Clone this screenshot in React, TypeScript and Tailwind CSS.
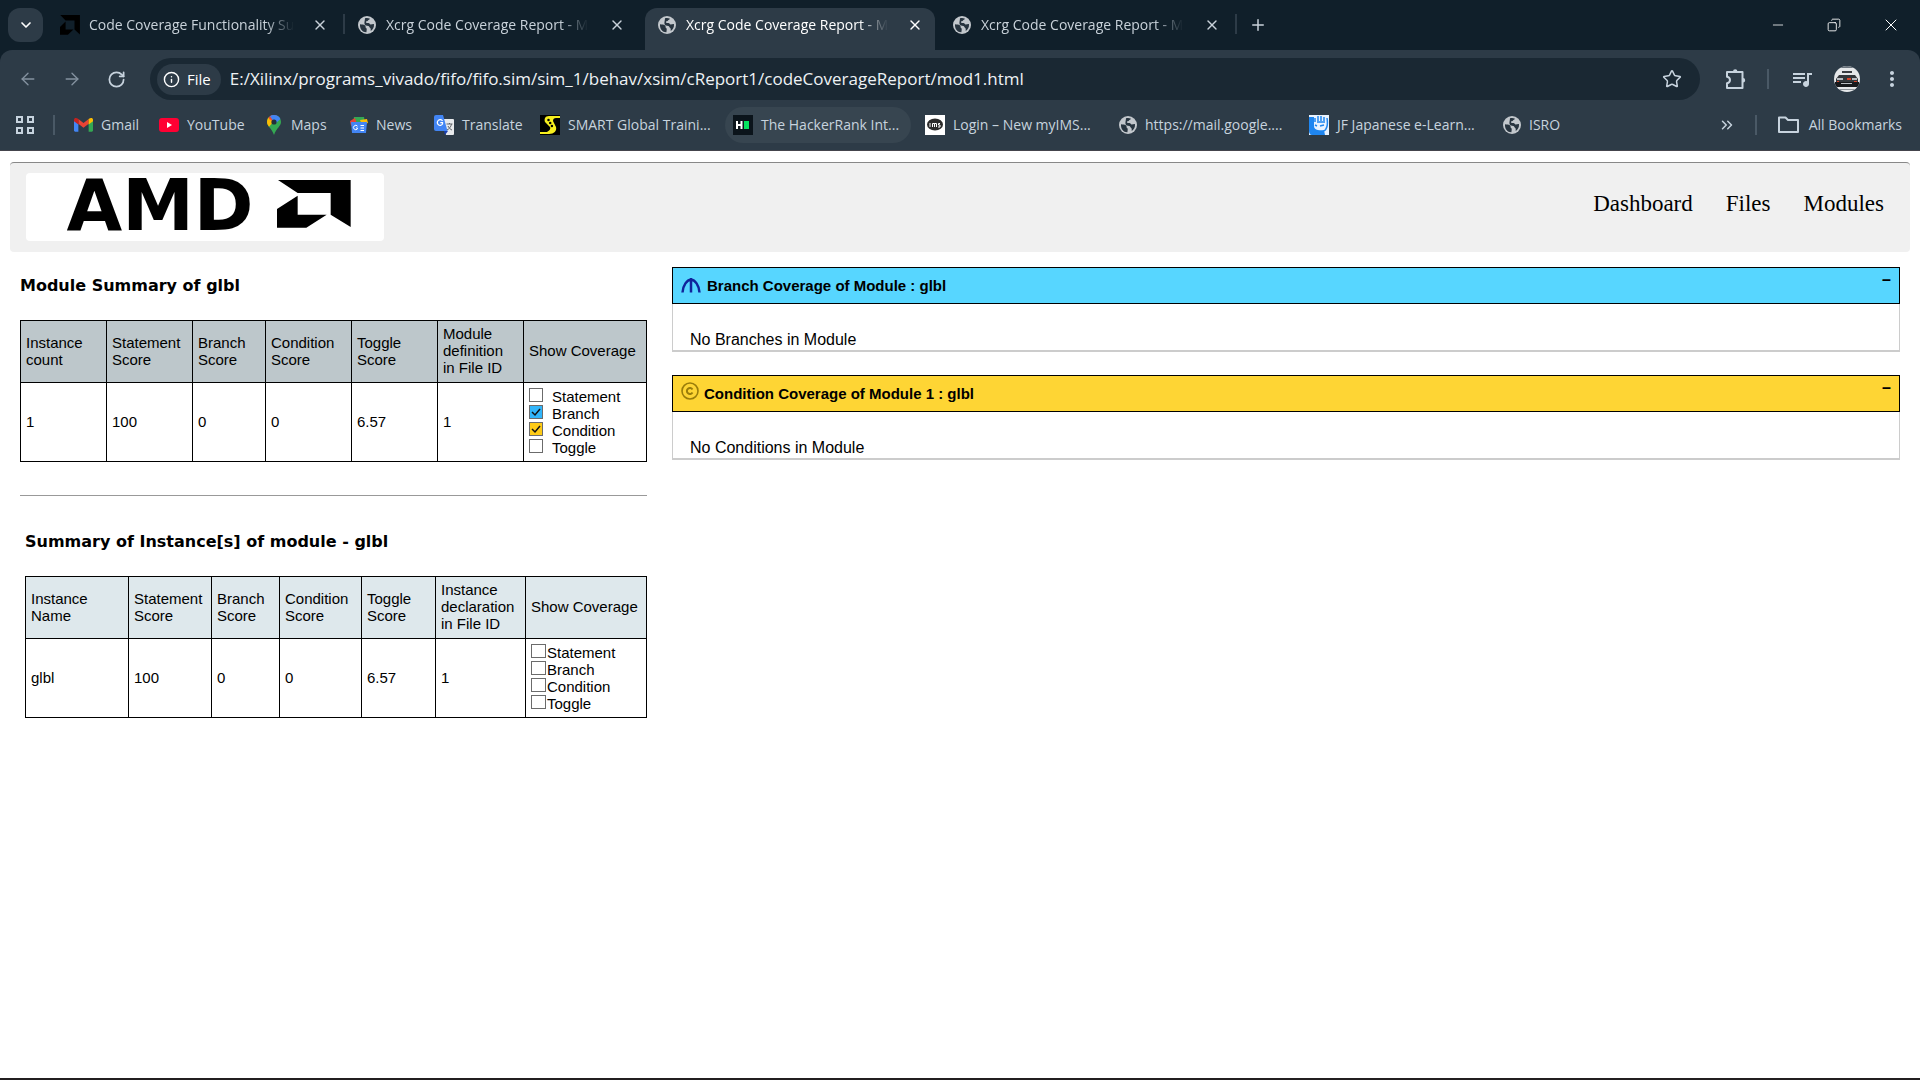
import React, { useState } from "react";
import { ArrowLeft, ArrowRight, ChevronDown, ChevronsRight, Copy, Info, Minus, Plus, RotateCw, Star, X } from "lucide-react";
import { MdQueueMusic, MdMoreVert } from "react-icons/md";

const UI = "font-['Open_Sans','Noto_Sans',sans-serif]";
const ARIAL = "font-['Liberation_Sans',Arial,sans-serif]";

function GlobeIcon({ className }: { className?: string }) {
  return (
    <svg viewBox="0 0 18 18" className={className} aria-hidden="true">
      <circle cx="9" cy="9" r="9" fill="#c2c7cc" />
      <path d="M2 8.2c2 .3 4.300.2 5.200 1.300.9 1-.2 2 .9 2.600 1 .5.600 2.200.3 4.100C4.800 16.400 1.600 13.200 2 8.200z" fill="#27343f" />
      <path d="M7 2.200c1.800-.6 3.600-.3 5 .5-.3 1-1.700 1-2 1.900-.3.900-1.900.4-2 1.300-.1 1 1.400 1.300 2.400 1.200 1.100-.1 1 1.200 2.100 1.300 1.300.1 2.300-.5 3.500-.2.3 3-1.200 5.500-3.200 6.800-.4-1.100.5-2-.6-2.900-.9-.6-.7-1.900-2-2.100-1.500-.3-3.300-.5-3.700-2.100-.3-1.700.4-3.700.5-5.700z" fill="#27343f" />
    </svg>
  );
}

function AmdArrow({ className, fill = "#000" }: { className?: string; fill?: string }) {
  return (
    <svg viewBox="0 0 222 144" preserveAspectRatio="none" className={className} aria-hidden="true">
      <path d="M3 0H221V141L161 104V39H62z" fill={fill} />
      <path d="M62 47V104H149L88 143H0V87z" fill={fill} />
    </svg>
  );
}

function PuzzleIcon() {
  return (
    <svg viewBox="0 0 22 22" className="h-[22px] w-[22px]" fill="none" stroke="currentColor" strokeWidth="2" strokeLinejoin="round" aria-hidden="true">
      <path d="M2 4h15.500v16H2v-4.800c2-.4 3-1.600 3-3.200S4 9.200 2 8.800z" />
      <path d="M8 3.500a2.200 2.200 0 0 1 4.400 0zM18 10a2.200 2.200 0 0 1 0 4.400z" fill="currentColor" stroke="none" />
    </svg>
  );
}

const tabs = [
  { title: "Code Coverage Functionality Su", amd: true },
  { title: "Xcrg Code Coverage Report - M" },
  { title: "Xcrg Code Coverage Report - M", active: true },
  { title: "Xcrg Code Coverage Report - M" },
];

function TabStrip() {
  return (
    <div className="flex h-[50px] items-stretch pl-2">
      <button aria-label="Search tabs" className="mt-2 flex h-[34px] w-[35px] items-center justify-center rounded-xl bg-[#2d3b47] text-white">
        <ChevronDown size={16} strokeWidth={2.5} />
      </button>
      <div className="ml-[5px] flex">
        {tabs.map((t, i) => (
          <div
            key={i}
            className={
              "relative mt-2 flex h-[42px] items-center pb-2 pl-3 " +
              (t.active ? "ml-[3px] mr-[5px] w-[290px] rounded-t-xl bg-[#2d3b47] pr-3 text-white" : "w-[297px] pr-[17px] text-[#c9d2da]")
            }
          >
            {t.amd ? <AmdArrow className="h-5 w-5 shrink-0" /> : <GlobeIcon className="mx-px h-[18px] w-[18px] shrink-0" />}
            <span className="ml-[9px] whitespace-nowrap text-sm [mask-image:linear-gradient(to_right,#000_86%,transparent)]">
              {t.title}
            </span>
            <button aria-label="Close tab" className="ml-auto">
              <X size={16} />
            </button>
            {(i === 0 || i === 3) && <span className="absolute right-0 top-1.5 h-5 w-0.5 bg-[#2d3b47]" />}
          </div>
        ))}
      </div>
      <button aria-label="New tab" className="ml-3 text-[#c9d2da]">
        <Plus size={18} />
      </button>
      <div className="ml-auto flex items-center text-white">
        <button aria-label="Minimize" className="flex w-14 justify-center"><Minus size={16} strokeWidth={1.2} /></button>
        <button aria-label="Restore" className="flex w-14 justify-center"><Copy size={14} strokeWidth={1.5} className="-scale-x-100" /></button>
        <button aria-label="Close" className="flex w-[58px] justify-center"><X size={20} strokeWidth={1.2} /></button>
      </div>
    </div>
  );
}

function Toolbar() {
  return (
    <div className="flex h-[58px] items-center px-4 text-[#c7d3de]">
      <button aria-label="Back" className="ml-0.5 mr-6 text-[#8492a0]"><ArrowLeft size={20} strokeWidth={1.6} /></button>
      <button aria-label="Forward" className="mr-[25px] text-[#8492a0]"><ArrowRight size={20} strokeWidth={1.6} /></button>
      <button aria-label="Reload" className="mr-6"><RotateCw size={19} strokeWidth={2.2} /></button>
      <div className="flex h-[42px] flex-1 items-center rounded-full bg-[#1a2833] pl-[7px] pr-[18px]">
        <button className="flex h-[31px] items-center gap-[7px] rounded-full bg-[#2d3b47] px-1.5 pr-[10px] text-[15px] font-medium text-white">
          <Info size={17} />File
        </button>
        <input
          aria-label="Address"
          defaultValue="E:/Xilinx/programs_vivado/fifo/fifo.sim/sim_1/behav/xsim/cReport1/codeCoverageReport/mod1.html"
          className="ml-[9px] min-w-0 flex-1 bg-transparent text-[17px] text-[#eef2f5] outline-none"
        />
        <button aria-label="Bookmark"><Star size={20} strokeWidth={1.8} /></button>
      </div>
      <button aria-label="Extensions" className="ml-[25px]"><PuzzleIcon /></button>
      <span className="ml-[20px] h-5 w-0.5 bg-[#4a5966]" />
      <button aria-label="Media" className="ml-[21px]"><MdQueueMusic size={24} /></button>
      <button aria-label="Profile" className="ml-5">
        <svg viewBox="0 0 26 26" className="h-[26px] w-[26px]">
          <defs><clipPath id="avatar"><circle cx="13" cy="13" r="13" /></clipPath></defs>
          <g clipPath="url(#avatar)">
            <rect width="26" height="26" fill="#e6e8ea" />
            <path d="M0 0h26v2H0z" fill="#6c757e" />
            <path d="M8 5h10v2H8z" fill="#3a3d42" />
            <path d="M5 9h16l3 4v7H2v-7z" fill="#33373b" />
            <path d="M1 16h24v5H1z" fill="#17191c" />
            <path d="M3 12h6v2H3zM18 12h5v2h-5zM7 17h11v1H7z" fill="#b9bdc2" />
            <path d="M13 12h4v2h-4zM3 15h2v1H3zM20 15h3v1h-3z" fill="#d8452b" />
            <path d="M4 23h18v1H4z" fill="#8d9399" />
          </g>
        </svg>
      </button>
      <button aria-label="Menu" className="ml-5"><MdMoreVert size={24} /></button>
    </div>
  );
}

const marks: { label: string; icon: React.ReactNode; w: string; hover?: boolean }[] = [
  {
    label: "Gmail", w: "w-[85px]",
    icon: (
      <svg viewBox="0 0 24 18" className="h-[15px] w-[19px]">
        <path d="M0 3v13.500c0 .8.700 1.500 1.500 1.500H5.500V8z" fill="#4285f4" />
        <path d="M24 3v13.500c0 .8-.7 1.500-1.500 1.500H18.500V8z" fill="#34a853" />
        <path d="M5.500 8V2L12 7l6.500-5v6L12 13z" fill="#ea4335" />
        <path d="M0 3v2l5.500 4V2C3 0 0 .5 0 3z" fill="#c5221f" />
        <path d="M24 3v2l-5.500 4V2C21 0 24 .5 24 3z" fill="#fbbc04" />
      </svg>
    ),
  },
  {
    label: "YouTube", w: "w-[108px]",
    icon: <svg viewBox="0 0 20 14" className="h-[14px] w-5"><rect width="20" height="14" rx="3" fill="#ff0033" /><path d="M8 4l5 3-5 3z" fill="#fff" /></svg>,
  },
  {
    label: "Maps", w: "w-[83px]",
    icon: (
      <svg viewBox="0 0 14 20" className="mr-0.5 h-5 w-[14px]">
        <path d="M7 0C3 0 0 3 0 7c0 4 4.500 6 7 13 2.500-7 7-9 7-13 0-4-3-7-7-7z" fill="#34a853" />
        <path d="M1.600 2.500C.5 4 0 5.400 0 7c0 1.700.8 3.200 2 4.700L8 5z" fill="#fbbc04" />
        <path d="M1.600 2.500L6 6.500 2 4z" fill="#ea4335" />
        <path d="M1.600 2.500L5.500 6 10 .7C6.800-.6 3.500 0 1.600 2.500z" fill="#ea4335" />
        <path d="M3 1.300C6-1 12 0 13.400 4L9 8 5.500 5z" fill="#4285f4" />
        <circle cx="7" cy="7" r="2.600" fill="#22303b" />
      </svg>
    ),
  },
  {
    label: "News", w: "w-[84px]",
    icon: (
      <svg viewBox="0 0 18 16" className="h-4 w-[18px]">
        <path d="M4 0h10l1 6H3z" fill="#34a853" />
        <path d="M0 4l5-3 2 6-6 2z" fill="#ea4335" />
        <path d="M10 3l7-1 1 4-6 2z" fill="#fbbc04" />
        <path d="M1 5h16l-1 11H2z" fill="#4285f4" />
        <path d="M7.500 9.200a2.200 2.200 0 1 0 0 2.600V11H6M14 8.500h-3.500M14 11h-3.500M14 13.500h-3.500" stroke="#fff" fill="none" />
      </svg>
    ),
  },
  {
    label: "Translate", w: "w-[106px]",
    icon: (
      <svg viewBox="0 0 20 20" className="h-5 w-5">
        <path d="M8 4h11a1 1 0 0 1 1 1v14a1 1 0 0 1-1 1h-7z" fill="#e8eaed" />
        <path d="M10 16h4l-3 4z" fill="#1a3fb0" />
        <path d="M2 0h7l4.500 16H2a2 2 0 0 1-2-2V2a2 2 0 0 1 2-2z" fill="#4285f4" />
        <path d="M8.500 6A2.800 2.800 0 1 0 8.500 9V7.600H6.300" stroke="#fff" strokeWidth="1.300" fill="none" />
        <path d="M12.500 9h6M15.500 8v1M17.500 9c-.5 3-2.500 5-4.500 6M14 11c1 2 2.500 3.500 4 4" stroke="#5f6368" fill="none" />
      </svg>
    ),
  },
  {
    label: "SMART Global Traini...", w: "w-[193px]",
    icon: (
      <svg viewBox="0 0 20 20" className="h-5 w-5">
        <rect width="20" height="20" fill="#000" />
        <path d="M20 1H9C5 1 4 4 5 7l5 5c1 2-1 4-3 5H0v2h9c5 0 8-3 7-7l-3-6c0-2 1-3 3-3h4z" fill="#f6ee1e" />
        <path d="M8.500 5l4.500 8" stroke="#000" strokeWidth="2.500" strokeLinecap="round" strokeDasharray="0 3.500" />
      </svg>
    ),
  },
  {
    label: "The HackerRank Int...", w: "w-[192px]", hover: true,
    icon: <svg viewBox="0 0 20 20" className="h-5 w-5"><rect width="20" height="20" fill="#0b141b" /><path d="M4 6v8M8.500 6v8M4 10h5" stroke="#fff" strokeWidth="2" /><path d="M11 6h5v8h-5z" fill="#05e45f" /></svg>,
  },
  {
    label: "Login – New myIMS...", w: "w-[194px]",
    icon: <svg viewBox="0 0 20 20" className="h-5 w-5"><rect width="20" height="20" fill="#fff" /><ellipse cx="10" cy="9.500" rx="8" ry="6" fill="#2b2b2b" /><path d="M5 8v4M7.500 12V8.500h2V12M9.500 8.500h2V12M15 8.500h-1.500V10H15v2h-2" stroke="#fff" fill="none" /></svg>,
  },
  { label: "https://mail.google....", w: "w-[190px]", icon: <GlobeIcon className="h-[18px] w-[18px]" /> },
  {
    label: "JF Japanese e-Learn...", w: "w-[194px]",
    icon: <svg viewBox="0 0 20 20" className="h-5 w-5"><rect width="20" height="20" fill="#e9f3ff" /><path d="M0 2h5v9c0 4 5 5 10 4l1 5H3C1 20 0 18 0 16z" fill="#1f86f0" /><path d="M6 3v4M9 1v5M12 1v5M15 2v4M18 3c1 6 0 11-3 13M6 10l2 1M11 11l4-1M8 7h8" stroke="#1f86f0" strokeWidth="1.500" fill="none" /></svg>,
  },
  { label: "ISRO", w: "w-[70px]", icon: <GlobeIcon className="h-[18px] w-[18px]" /> },
];

function Bookmarks() {
  return (
    <div className="flex h-[42px] items-center pb-[9px] pl-4 pr-[18px] text-sm text-[#c7d3de]">
      <button aria-label="Apps">
        <svg viewBox="0 0 18 18" className="h-[18px] w-[18px]" fill="none" stroke="#c7d3de" strokeWidth="2">
          <path d="M1 1h5v5H1zM12 1h5v5h-5zM1 12h5v5H1zM12 12h5v5h-5z" />
        </svg>
      </button>
      <span className="ml-[19px] mr-[19px] h-5 w-0.5 bg-[#4a5966]" />
      <nav className="flex">
        {marks.map((m) => (
          <a key={m.label} href="#" className={"relative flex h-9 items-center gap-2 whitespace-nowrap " + m.w}>
            {m.hover && <span className="absolute -left-2 right-[14px] top-0 h-9 rounded-full bg-[#374550]" />}
            <span className="relative flex shrink-0">{m.icon}</span>
            <span className="relative">{m.label}</span>
          </a>
        ))}
      </nav>
      <button aria-label="More bookmarks" className="ml-auto mr-[19px]"><ChevronsRight size={18} /></button>
      <span className="mr-[21px] h-5 w-0.5 bg-[#4a5966]" />
      <button className="flex items-center gap-[10px]">
        <svg viewBox="0 0 21 17" className="h-[17px] w-[21px]" fill="none" stroke="currentColor" strokeWidth="2" strokeLinejoin="round" aria-hidden="true">
          <path d="M1 1.500h6.500L10 4h10v12H1z" />
        </svg>
        All Bookmarks
      </button>
    </div>
  );
}

function CoverageBoxes({ prefix, checked, loose }: { prefix: string; checked: string[]; loose?: boolean }) {
  const [on, setOn] = useState<string[]>(checked);
  return (
    <div className="flex flex-col">
      {["Statement", "Branch", "Condition", "Toggle"].map((n) => {
        const id = prefix + n;
        const isOn = on.includes(n);
        return (
          <div key={n} className="flex h-[17px] items-center">
            <span className="relative flex">
              <input
                id={id}
                type="checkbox"
                checked={isOn}
                onChange={() => setOn(isOn ? on.filter((x) => x !== n) : [...on, n])}
                className={
                  "mb-[3px] appearance-none border border-[#6b6b6b] " +
                  (loose ? "h-[14px] w-[14px] " : "h-[14px] w-[15px] ") +
                  (isOn ? (n === "Branch" ? "bg-[#31b5fa]" : "bg-[#fecb16]") : "bg-white")
                }
              />
              {isOn && (
                <svg viewBox="0 0 14 14" className="pointer-events-none absolute left-0 top-0 h-[14px] w-[14px]" fill="none" stroke="#111" strokeWidth="1.500">
                  <path d="M3 7l3 3 5-6" />
                </svg>
              )}
            </span>
            <label htmlFor={id} className={loose ? "ml-[9px]" : "ml-px"}>{n}</label>
          </div>
        );
      })}
    </div>
  );
}

type Col = { head: string[]; w: string };

function SummaryTable({ cols, row, headBg, boxes }: { cols: Col[]; row: string[]; headBg: string; boxes: React.ReactNode }) {
  return (
    <table className={"w-full table-fixed border-collapse border border-black text-left text-[15px] leading-[17px] " + ARIAL}>
      <colgroup>{cols.map((c, i) => <col key={i} className={c.w} />)}</colgroup>
      <thead>
        <tr className={"h-[62px] " + headBg}>
          {cols.map((c, i) => (
            <th key={i} className="whitespace-nowrap border border-black pb-0.5 pl-[5px] font-normal">
              {c.head.map((l) => <span key={l} className="block">{l}</span>)}
            </th>
          ))}
        </tr>
      </thead>
      <tbody>
        <tr className="h-[79px]">
          {row.map((v, i) => <td key={i} className="border border-black pb-0.5 pl-[5px]">{v}</td>)}
          <td className="border border-black pl-[5px]">{boxes}</td>
        </tr>
      </tbody>
    </table>
  );
}

function Panel({ title, body, bg, icon }: { title: string; body: string; bg: string; icon: React.ReactNode }) {
  const [open, setOpen] = useState(true);
  return (
    <section className={ARIAL}>
      <div className={"flex h-[37px] items-center border border-black px-2 " + bg}>
        {icon}
        <h2 className="pt-0.5 text-[15px] font-bold">{title}</h2>
        <button aria-label="Collapse" onClick={() => setOpen(!open)} className="ml-auto self-start text-base font-bold leading-6">–</button>
      </div>
      {open && <p className="border border-b-2 border-t-0 border-[#ccc] pl-[17px] pt-[26px] text-base leading-5">{body}</p>}
    </section>
  );
}

const moduleCols: Col[] = [
  { head: ["Instance", "count"], w: "w-[86px]" },
  { head: ["Statement", "Score"], w: "w-[86px]" },
  { head: ["Branch", "Score"], w: "w-[73px]" },
  { head: ["Condition", "Score"], w: "w-[86px]" },
  { head: ["Toggle", "Score"], w: "w-[86px]" },
  { head: ["Module", "definition", "in File ID"], w: "w-[86px]" },
  { head: ["Show Coverage"], w: "w-[123px]" },
];
const instanceCols: Col[] = [
  { head: ["Instance", "Name"], w: "w-[103px]" },
  { head: ["Statement", "Score"], w: "w-[83px]" },
  { head: ["Branch", "Score"], w: "w-[68px]" },
  { head: ["Condition", "Score"], w: "w-[82px]" },
  { head: ["Toggle", "Score"], w: "w-[74px]" },
  { head: ["Instance", "declaration", "in File ID"], w: "w-[90px]" },
  { head: ["Show Coverage"], w: "w-[121px]" },
];

export default function App() {
  return (
    <div className="flex min-h-screen flex-col border-b-2 border-[#231f20] bg-white text-black">
      <header className={"bg-[#101f2a] " + UI}>
        <TabStrip />
        <div className="rounded-t-xl border-b border-[#44444c] bg-[#2d3b47]">
          <Toolbar />
          <Bookmarks />
        </div>
      </header>
      <main className="flex-1 px-[10px] pt-[11px]">
        <div className="flex h-[90px] items-start justify-between rounded border-t border-[#888] bg-[#f0f0f0] pl-4 pr-[26px] pt-[10px]">
          <div className="flex h-[68px] w-[358px] items-start rounded bg-white">
            <span className="w-[251px] pl-[17px] pt-2 text-center font-['DejaVu_Sans',sans-serif] text-[72px] font-bold leading-[48px]">AMD</span>
            <AmdArrow className="mt-[7px] h-12 w-[74px]" />
          </div>
          <nav className="mt-[17px] flex gap-[33px] font-['Liberation_Serif',serif] text-[23px] leading-7">
            <a href="#">Dashboard</a>
            <a href="#">Files</a>
            <a href="#">Modules</a>
          </nav>
        </div>
        <div className="flex gap-[25px] px-[10px] pt-[15px]">
          <div className="w-[627px] shrink-0">
            <h1 className="pt-[7px] font-['DejaVu_Sans',sans-serif] text-base font-bold leading-6">Module Summary of glbl</h1>
            <div className="pt-[22px]">
              <SummaryTable cols={moduleCols} row={["1", "100", "0", "0", "6.57", "1"]} headBg="bg-[#bdc7cb]" boxes={<CoverageBoxes prefix="module" checked={["Branch", "Condition"]} loose />} />
            </div>
            <hr className="mt-[33px] border-[#999]" />
            <div className="pl-[5px]">
              <h2 className="pt-[34px] font-['DejaVu_Sans',sans-serif] text-base font-bold leading-6">Summary of Instance[s] of module - glbl</h2>
              <div className="pt-[22px]">
                <SummaryTable cols={instanceCols} row={["glbl", "100", "0", "0", "6.57", "1"]} headBg="bg-[#dee8ec]" boxes={<CoverageBoxes prefix="instance" checked={[]} />} />
              </div>
            </div>
          </div>
          <div className="flex min-w-0 flex-1 flex-col gap-[23px]">
            <Panel
              title="Branch Coverage of Module : glbl"
              body="No Branches in Module"
              bg="bg-[#57d6ff]"
              icon={
                <svg viewBox="0 0 20 15" className="mr-[6px] h-[15px] w-5" fill="none" stroke="#10249c" strokeWidth="2.500" aria-hidden="true">
                  <path d="M1.500 14.500C2 7 6 2 10 1.500c4 .5 8 5.500 8.500 13M10 0v14.500" />
                </svg>
              }
            />
            <Panel
              title="Condition Coverage of Module 1 : glbl"
              body="No Conditions in Module"
              bg="bg-[#fed534]"
              icon={
                <svg viewBox="0 0 18 18" className="mb-1.5 mr-[5px] h-[18px] w-[18px]" fill="none" stroke="#9a7d0a" aria-hidden="true">
                  <circle cx="9" cy="9" r="8" strokeWidth="1.600" />
                  <path d="M11.500 7.500A3 3 0 1 0 11.500 10.500" strokeWidth="2" />
                </svg>
              }
            />
          </div>
        </div>
      </main>
    </div>
  );
}
